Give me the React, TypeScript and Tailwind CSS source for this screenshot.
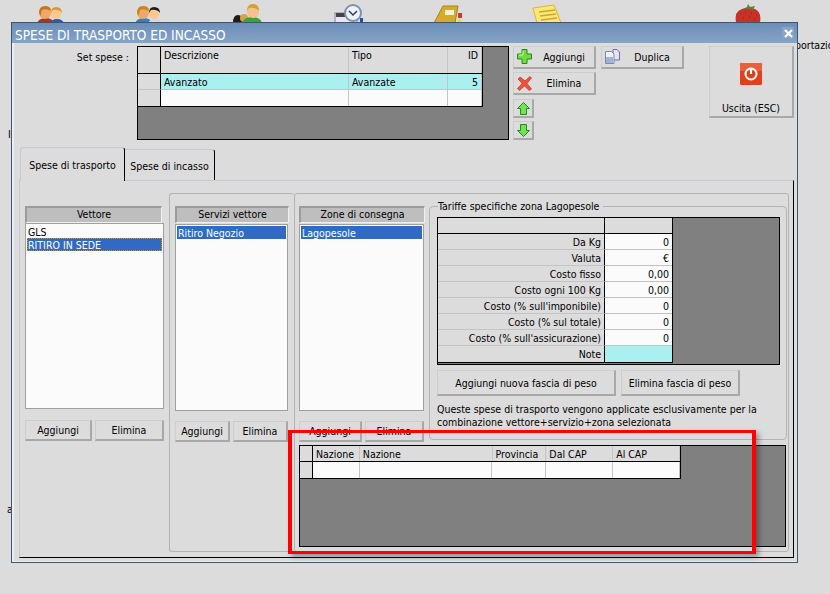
import type { ReactNode } from "react";

const btn =
  "flex items-center justify-center pt-[2px] bg-[#dcdcdc] border border-[#cdcdcd] border-r-2 border-b-2 border-r-[#a8a8a8] border-b-[#a8a8a8] text-black";

function Btn({ className, children }: { className: string; children: ReactNode }) {
  return <button className={`${btn} ${className}`}>{children}</button>;
}

function Persons({ hair1, hair2, shirt1, shirt2 }: { hair1: string; hair2: string; shirt1: string; shirt2: string }) {
  return (
    <svg width="30" height="19" viewBox="0 0 30 19">
      <path d="M1 19 Q2 13 10 13 Q17 13 18 19Z" fill={shirt1} />
      <path d="M14 19 Q15 14 21 14 Q27 14 28 19Z" fill={shirt2} />
      <circle cx="9" cy="8" r="6" fill="#f0a868" />
      <path d="M3 8 Q3 1 9 1 Q15 1 15 6 Q10 3 6 5 Q5 7 5 11Z" fill={hair1} />
      <circle cx="20" cy="9" r="5" fill="#fbc78f" />
      <path d="M15 8 Q15 2 20 2 Q26 2 26 8 Q23 4 17 5Z" fill={hair2} />
    </svg>
  );
}

function DesktopIcons() {
  return (
    <>
      <div className="absolute left-[36px] top-[5px]">
        <Persons hair1="#c8761e" hair2="#d89a30" shirt1="#c02828" shirt2="#1f5fb8" />
      </div>
      <div className="absolute left-[134px] top-[5px]">
        <Persons hair1="#c8841e" hair2="#1c1c1c" shirt1="#2f7fd0" shirt2="#d8d8d8" />
      </div>
      <svg className="absolute left-[232px] top-[3px]" width="32" height="20" viewBox="0 0 32 20">
        <path d="M1 20 Q1 12 6 12 Q11 12 11 20Z" fill="#1c1c1c" />
        <circle cx="12" cy="15" r="4" fill="#d8a050" />
        <path d="M10 20 Q12 14 20 14 Q28 14 30 20Z" fill="#3aa23a" />
        <circle cx="21" cy="9" r="6" fill="#f6c090" />
        <path d="M15 8 Q15 1 21 1 Q27 1 27 8 Q24 4 17 5Z" fill="#d8a028" />
      </svg>
      <svg className="absolute left-[334px] top-[4px]" width="30" height="19" viewBox="0 0 30 19">
        <rect x="1" y="9" width="22" height="10" fill="#e8e4f0" stroke="#8080b0" />
        <rect x="2" y="9" width="10" height="4" fill="#444" />
        <circle cx="19" cy="9" r="8" fill="#eef2fa" stroke="#8090b0" strokeWidth="2" />
        <path d="M15 7 L19 11 L23 7" fill="none" stroke="#2c3e60" strokeWidth="1.5" />
        <rect x="26" y="14" width="3" height="5" fill="#1c50b0" />
      </svg>
      <svg className="absolute left-[433px] top-[4px]" width="31" height="19" viewBox="0 0 31 19">
        <path d="M1 19 L10 2 L25 2 L22 19Z" fill="#d4ac28" stroke="#a88410" />
        <rect x="12" y="6" width="9" height="5" fill="#f8f0d0" />
        <rect x="25" y="9" width="4" height="5" fill="#e03020" />
        <rect x="25" y="15" width="3" height="4" fill="#f0e020" />
      </svg>
      <svg className="absolute left-[532px] top-[4px]" width="30" height="19" viewBox="0 0 30 19">
        <path d="M1 4 L22 1 L29 19 L5 19Z" fill="#fbe878" stroke="#e0b820" />
        <path d="M7 8 L23 6 M8 12 L24 10 M9 16 L25 14" stroke="#c8a830" strokeWidth="1.5" />
      </svg>
      <svg className="absolute left-[734px] top-[3px]" width="29" height="20" viewBox="0 0 29 20">
        <path d="M2 20 Q0 8 8 6 Q14 4 21 6 Q28 9 26 20Z" fill="#c8302a" />
        <path d="M9 6 L13 4 L14 1 L16 4 L21 3 L19 7 L14 6Z" fill="#6a7a30" />
        <path d="M6 11h1M11 9h1M17 10h1M22 12h1M9 15h1M15 14h1M20 16h1" stroke="#8a1c18" />
      </svg>
    </>
  );
}

type Col = { label: string; w: string; right?: boolean; value?: string };

function GridHeadCell({ className, children }: { className: string; children?: ReactNode }) {
  return <div className={`bg-[#dcdcdc] border-r border-r-[#c4c4c4] px-[3px] leading-[17px] ${className}`}>{children}</div>;
}

function TopGrid() {
  const cols: Col[] = [
    { label: "Descrizione", w: "w-[188px]", value: "Avanzato" },
    { label: "Tipo", w: "w-[99px]", value: "Avanzate" },
    { label: "ID", w: "w-[34px]", right: true, value: "5" },
  ];
  return (
    <div className="w-[372px] h-[94px] bg-[#808080] border border-black">
      <div className="w-[345px] bg-[#fbfbfb] border-r border-b border-black">
        <div className="flex h-[27px] border-b border-black">
          <div className="w-[23px] bg-[#dcdcdc] border-r border-black" />
          {cols.map((c) => (
            <GridHeadCell key={c.label} className={`${c.w} ${c.right ? "text-right" : ""}`}>
              {c.label}
            </GridHeadCell>
          ))}
        </div>
        <div className="flex h-[16px]">
          <div className="w-[23px] bg-[#dcdcdc] border-r border-black border-b border-b-[#c4c4c4]" />
          {cols.map((c) => (
            <div key={c.label} className={`${c.w} bg-[#aaf0f0] border-r border-r-[#c4c4c4] border-b border-b-[#c4c4c4] px-[3px] leading-[17px] ${c.right ? "text-right" : ""}`}>
              {c.value}
            </div>
          ))}
        </div>
        <div className="flex h-[16px]">
          <div className="w-[23px] bg-[#dcdcdc] border-r border-black" />
          {cols.map((c) => (
            <div key={c.label} className={`${c.w} border-r border-r-[#c4c4c4]`} />
          ))}
        </div>
      </div>
    </div>
  );
}

function PlusIcon() {
  return (
    <svg width="15" height="15" viewBox="0 0 15 15">
      <path d="M5 .5h5v4.500h4.500v5H10v4.500H5V10H.5V5H5z" fill="#6fdc3c" stroke="#2a8a1c" />
      <path d="M6 2v4H2" fill="none" stroke="#c8f8a8" />
    </svg>
  );
}

function CrossIcon() {
  return (
    <svg width="15" height="15" viewBox="0 0 15 15">
      <path d="M1 3 L3 1 Q6 3 8 5 Q11 2 13 .5 L14.500 2 Q12 5 10 7.500 Q12 10 14.500 13 L12 14.500 Q10 12 7.500 10 Q5 12 2.500 14.500 L.5 12.500 Q3 10 5 7.500 Q3 5 1 3Z" fill="#f0503c" stroke="#c83020" strokeWidth=".7" />
    </svg>
  );
}

function DuplicateIcon() {
  return (
    <svg width="15" height="15" viewBox="0 0 15 15">
      <path d="M8 .5h4l2.500 2.500v8H8z" fill="#e4e4f4" stroke="#7468b0" />
      <path d="M.5 2.500h6l2.500 2.500v9.500H.5z" fill="#eef0fa" stroke="#8088a8" />
      <rect x="1" y="8" width="7" height="6" fill="#a0b4d8" />
    </svg>
  );
}

function Arrow({ down }: { down?: boolean }) {
  return (
    <svg width="13" height="13" viewBox="0 0 13 13" className={down ? "rotate-180" : ""}>
      <path d="M6.500 .5 L12.500 6.500 H9.500 V12.500 H3.500 V6.500 H.5Z" fill="#72e452" stroke="#1f8a2a" />
    </svg>
  );
}

function PowerIcon() {
  return (
    <svg width="24" height="24" viewBox="0 0 24 24">
      <rect x=".5" y=".5" width="23" height="23" rx="2" fill="#e0401c" stroke="#f4d8d0" />
      <rect x="1" y="1" width="22" height="8" rx="1" fill="#e8603c" />
      <circle cx="12" cy="12" r="5.500" fill="none" stroke="#fff" strokeWidth="2" />
      <rect x="11" y="6" width="2" height="6" fill="#fff" />
    </svg>
  );
}

function ColumnHead({ children, className }: { children: ReactNode; className: string }) {
  return (
    <div className={`h-[17px] bg-[#bebebe] border border-t-2 border-l-2 border-t-[#9c9c9c] border-l-[#9c9c9c] border-r-[#f0f0f0] border-b-[#f0f0f0] text-center leading-[13px] ${className}`}>
      {children}
    </div>
  );
}

function ListBox({ className, items, selected, focused }: { className: string; items: string[]; selected: string; focused?: boolean }) {
  return (
    <div className={`bg-[#fbfbfb] border border-[#a0a0a0] p-[1px] ${className}`}>
      {items.map((it) => (
        <div
          key={it}
          className={`h-[13px] leading-[14px] px-[1px] ${it === selected ? "bg-[#316ac5] text-white" : ""} ${it === selected && focused ? "outline-1 outline-dotted outline-[#c09040] -outline-offset-1" : ""}`}
        >
          {it}
        </div>
      ))}
    </div>
  );
}

const rates = [
  ["Da Kg", "0"],
  ["Valuta", "€"],
  ["Costo fisso", "0,00"],
  ["Costo ogni 100 Kg", "0,00"],
  ["Costo (% sull'imponibile)", "0"],
  ["Costo (% sul totale)", "0"],
  ["Costo (% sull'assicurazione)", "0"],
];

function RatesGrid() {
  return (
    <div className="w-[343px] h-[148px] bg-[#808080] border border-black">
      <div className="w-[235px] border-r border-b border-[#000]">
        <div className="flex h-[16px] border-b border-black">
          <div className="w-[167px] bg-[#dcdcdc] border-r border-black" />
          <div className="w-[67px] bg-[#dcdcdc]" />
        </div>
        {rates.map(([label, value]) => (
          <div key={label} className="flex h-[16px]">
            <div className="w-[167px] bg-[#dcdcdc] border-r border-black border-b border-b-[#c4c4c4] text-right pr-[3px] leading-[17px]">{label}</div>
            <div className="w-[67px] bg-[#fbfbfb] border-b border-b-[#c4c4c4] text-right pr-[3px] leading-[17px]">{value}</div>
          </div>
        ))}
        <div className="flex h-[16px]">
          <div className="w-[167px] bg-[#dcdcdc] border-r border-black text-right pr-[3px] leading-[17px]">Note</div>
          <div className="w-[67px] bg-[#aaf0f0]" />
        </div>
      </div>
    </div>
  );
}

function BottomGrid() {
  const cols = [
    ["Nazione", "w-[47px]"],
    ["Nazione", "w-[133px]"],
    ["Provincia", "w-[54px]"],
    ["Dal CAP", "w-[67px]"],
    ["Al CAP", "w-[67px]"],
  ];
  return (
    <div className="w-[487px] h-[102px] bg-[#808080] border border-black">
      <div className="w-[381px] border-r border-b border-black">
        <div className="flex h-[16px] border-b border-black">
          <div className="w-[13px] bg-[#dcdcdc] border-r border-black" />
          {cols.map(([label, w], i) => (
            <GridHeadCell key={i} className={w}>
              {label}
            </GridHeadCell>
          ))}
        </div>
        <div className="flex h-[16px]">
          <div className="w-[13px] bg-[#dcdcdc] border-r border-black" />
          {cols.map(([label, w], i) => (
            <div key={i} className={`${w} bg-[#fbfbfb] border-r border-r-[#c4c4c4]`} />
          ))}
        </div>
      </div>
    </div>
  );
}

export default function App() {
  return (
    <div className="relative w-[830px] h-[594px] overflow-hidden bg-[#dcdcdc] text-[10.5px] text-black [font-family:DejaVu_Sans_Condensed,Liberation_Sans,sans-serif]">
      <DesktopIcons />
      <span className="absolute left-[795px] top-[38px]">portazio</span>
      <span className="absolute left-[8px] top-[127px]">I</span>
      <span className="absolute left-[7px] top-[502px]">a</span>

      {/* finestra */}
      <div className="absolute left-[11px] top-[22px] w-[787px] h-[541px] flex flex-col bg-[#dcdcdc] border border-[#3f566e] shadow-[inset_1px_0_0_1px_#e8eef4]">
        <div className="h-[20px] flex items-center justify-between pl-[3px] pr-[3px] bg-gradient-to-b from-[#6b8db8] to-[#86a4c6] text-white text-[13.5px]">
          <span className="pt-[4px]">SPESE DI TRASPORTO ED INCASSO</span>
          <span className="w-[12px] h-[12px] flex items-center justify-center bg-[#86a4c6]">
            <svg width="9" height="9" viewBox="0 0 9 9">
              <path d="M1 1 L8 8 M8 1 L1 8" stroke="#fff" strokeWidth="2.200" />
            </svg>
          </span>
        </div>

        {/* set spese */}
        <div className="flex items-start mt-[3px] h-[94px]">
          <div className="w-[125px] text-right pr-[8px] mt-[4px] leading-[15px]">Set spese :</div>
          <TopGrid />
          <div className="ml-[4px] flex flex-col w-[84px] gap-[3px]">
            <Btn className="h-[23px] w-[83px] relative pl-[20px]">
              <span className="absolute left-[3px] top-[2px]">
                <PlusIcon />
              </span>
              Aggiungi
            </Btn>
            <Btn className="h-[23px] w-[83px] relative pl-[20px]">
              <span className="absolute left-[3px] top-[3px]">
                <CrossIcon />
              </span>
              Elimina
            </Btn>
            <div className="flex flex-col gap-[3px] mt-[1px]">
              <Btn className="h-[19px] w-[21px] !pt-0">
                <Arrow />
              </Btn>
              <Btn className="h-[19px] w-[21px] !pt-0">
                <Arrow down />
              </Btn>
            </div>
          </div>
          <Btn className="ml-[4px] h-[23px] w-[83px] relative pl-[20px]">
            <span className="absolute left-[3px] top-[2px]">
              <DuplicateIcon />
            </span>
            Duplica
          </Btn>
          <Btn className="ml-[25px] h-[72px] w-[85px] flex-col !justify-start border-r-0 gap-[15px] !pt-[15px]">
            <PowerIcon />
            <span className="leading-[14px]">Uscita (ESC)</span>
          </Btn>
        </div>

        {/* tabs */}
        <div className="flex items-start ml-[8px] mt-[7px] h-[33px]">
          <div className="w-[105px] h-[34px] pt-[2px] bg-[#dcdcdc] border-t border-l border-[#c8c8d0] border-r border-r-black rounded-t-[3px] flex items-center justify-center relative z-10">
            Spese di trasporto
          </div>
          <div className="w-[90px] h-[31px] mt-[2px] pt-[3px] border-t border-t-[#c8c8d0] border-r border-r-black rounded-tr-[3px] flex items-center justify-center">
            Spese di incasso
          </div>
        </div>

        {/* pannello tab */}
        <div className="ml-[7px] w-[775px] h-[378px] flex items-start border-t border-t-[#c8c8d0] border-l border-l-[#c8c8d0] border-r border-r-black border-b border-b-black">
          <div className="ml-[5px] mt-[25px] w-[139px] flex flex-col">
            <ColumnHead className="w-[137px]">Vettore</ColumnHead>
            <ListBox className="w-[139px] h-[186px]" items={["GLS", "RITIRO IN SEDE"]} selected="RITIRO IN SEDE" focused />
            <div className="flex gap-[3px] mt-[11px]">
              <Btn className="w-[67px] h-[21px]">Aggiungi</Btn>
              <Btn className="w-[69px] h-[21px]">Elimina</Btn>
            </div>
          </div>

          <div className="ml-[5px] mt-[12px] w-[125px] h-[359px] flex flex-col border border-r-0 border-[#b4b4b4] rounded-[3px] pl-[5px]">
            <ColumnHead className="w-[114px] mt-[12px]">Servizi vettore</ColumnHead>
            <ListBox className="w-[113px] h-[187px] mt-[1px]" items={["Ritiro Negozio"]} selected="Ritiro Negozio" />
            <div className="flex gap-[3px] mt-[10px]">
              <Btn className="w-[55px] h-[21px]">Aggiungi</Btn>
              <Btn className="w-[55px] h-[21px]">Elimina</Btn>
            </div>
          </div>

          <div className="mt-[12px] w-[495px] h-[359px] border border-[#b4b4b4] rounded-[3px] pl-[4px]">
            <div className="flex h-[251px]">
              <div className="w-[126px] flex flex-col">
                <ColumnHead className="w-[126px] mt-[12px]">Zone di consegna</ColumnHead>
                <ListBox className="w-[125px] h-[187px] mt-[1px]" items={["Lagopesole"]} selected="Lagopesole" />
                <div className="flex gap-[3px] mt-[10px]">
                  <Btn className="w-[63px] h-[21px]">Aggiungi</Btn>
                  <Btn className="w-[59px] h-[21px]">Elimina</Btn>
                </div>
              </div>
              <fieldset className="ml-[4px] mt-[5px] w-[358px] h-[241px] border border-[#b4b4b4] rounded-[4px] pl-[7px] pt-[4px]">
                <legend className="ml-[1px] px-[2px] leading-[14px] -translate-x-[2px]">Tariffe specifiche zona Lagopesole</legend>
                <RatesGrid />
                <div className="flex gap-[5px] mt-[5px]">
                  <Btn className="w-[179px] h-[26px]">Aggiungi nuova fascia di peso</Btn>
                  <Btn className="w-[119px] h-[26px]">Elimina fascia di peso</Btn>
                </div>
                <p className="mt-[7px] leading-[13px]">
                  Queste spese di trasporto vengono applicate esclusivamente per la
                  <br />
                  combinazione vettore+servizio+zona selezionata
                </p>
              </fieldset>
            </div>
            <BottomGrid />
          </div>
        </div>
      </div>

      {/* evidenziazione */}
      <div className="absolute left-[288px] top-[430px] w-[468px] h-[124px] border-[3px] border-l-4 border-r-4 border-[#ff0000] shadow-[3px_3px_5px_rgba(0,0,0,0.35)]" />
    </div>
  );
}
